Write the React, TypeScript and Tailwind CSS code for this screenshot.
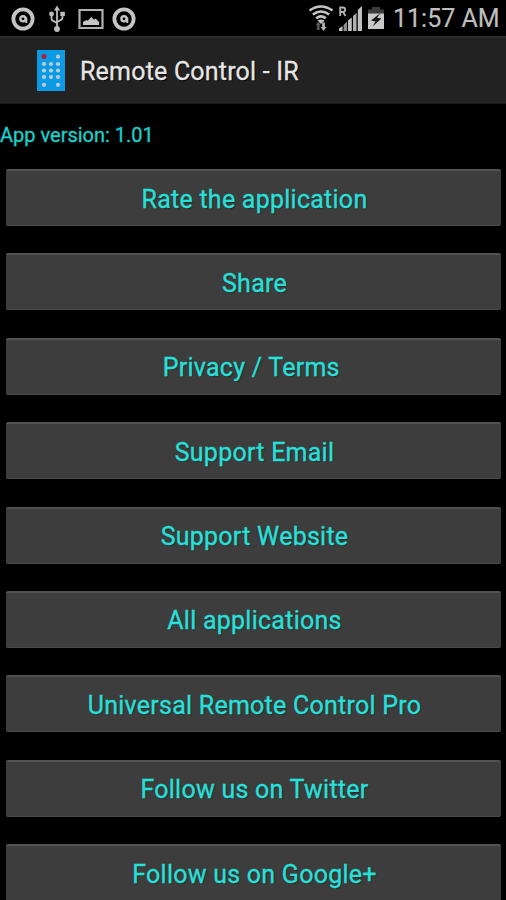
const actions = [
  'Rate the application',
  'Share',
  'Privacy / Terms ',
  'Support Email',
  'Support Website',
  'All applications',
  'Universal Remote Control Pro',
  'Follow us on Twitter',
  'Follow us on Google+',
];

const AppBadgeIcon = () => (
  <svg width="24" height="24" viewBox="0 0 24 24" fill="none" stroke="#c4c4c4">
    <circle cx="12" cy="12" r="9.6" strokeWidth="3.8" />
    <circle cx="12" cy="11.8" r="2.600" strokeWidth="2.400" />
    <path d="M15.300 10.500v5.500" strokeWidth="2" />
  </svg>
);

const UsbIcon = () => (
  <svg width="18" height="28" viewBox="0 0 18 28" fill="none" stroke="#bdbdbd" strokeWidth="1.8">
    <path d="M9 4v20" />
    <path d="M3.500 10v3.500q0 2 2 2.600L9 18" />
    <path d="M14.500 9v3.500q0 2-2 2.600L9 17" />
    <g fill="#bdbdbd" stroke="none">
      <path d="M9 0.500l3 5H6z" />
      <circle cx="3.500" cy="9" r="2.400" />
      <path d="M12.300 6.800h4.600v4.200h-4.600z" />
      <circle cx="9" cy="24" r="2.900" />
    </g>
  </svg>
);

const PictureIcon = () => (
  <svg width="26" height="22" viewBox="0 0 26 22" fill="none">
    <path d="M1.500 2h23v18h-23z" stroke="#b0b0b0" strokeWidth="2.200" />
    <path d="M5 17v-3l3-1.800 2 .2 3.200-3.400 2.800 2.800 1.600-1.300 3.400 3.500v3z" fill="#c4c4c4" />
  </svg>
);

const WifiIcon = () => (
  <svg width="26" height="28" viewBox="0 0 26 28" fill="none" stroke="#c4c4c4" strokeWidth="2.600">
    <path d="M1.500 6.500q11.500-8 23 0" />
    <path d="M4.800 10.500q8.200-6 16.400 0" />
    <path d="M8.200 14.200q4.800-3.600 9.600 0" />
    <path d="M9.500 16.500q3.500-2 7 0L13 20z" fill="#c4c4c4" stroke="none" />
    <path d="M10.300 17.500l2.300 3.500h-1V26H8.800v-5H7.600z" fill="#555" stroke="none" />
    <path d="M15.500 27l-3-4h1.600v-4.500h2.800V23h1.600z" fill="#b0b0b0" stroke="none" />
  </svg>
);

const SignalIcon = () => (
  <svg width="26" height="26" viewBox="0 0 26 26" fill="#c0c0c0">
    <path d="M2.200 10V1.500h2.500q2.500 0 2.500 2.200T4.700 6H2.200M5 6l2.600 4" fill="none" stroke="#b4b4b4" strokeWidth="1.800" />
    <path d="M1 22.500L4.500 20v5H1z" />
    <path d="M5.600 19L9 15.500V25H5.600z" fill="#8f8f8f" />
    <path d="M10 14.500l3.800-3V25H10z" />
    <path d="M15 10l3.500-3v18H15z" fill="#b0b0b0" />
    <path d="M19.800 4L24 0v25h-4.200z" />
  </svg>
);

const BatteryIcon = () => (
  <svg width="18" height="24" viewBox="0 0 18 24">
    <path d="M5 1h8v2.500h4V9H1V3.500h4z" fill="#3c3c3c" />
    <path d="M1 7.500h16V23H1z" fill="#c8c8c8" />
    <path d="M13.500 7L4 14.500l4.500 1L5.500 20.500l9-8-4.500-.7z" fill="#111" />
  </svg>
);

const RemoteIcon = () => (
  <svg width="28" height="41" viewBox="0 0 28 41">
    <path d="M0 0h28v41H0z" fill="#0c9ae4" />
    <g fill="#bccbd8">
      <circle cx="21" cy="6.700" r="2.100" />
      {[14, 20.5, 27].map((y) =>
        [7, 14, 21].map((x) => <circle key={`${x}-${y}`} cx={x} cy={y} r="2.100" />)
      )}
      <circle cx="7" cy="34.800" r="2.100" />
      <circle cx="21" cy="34.800" r="2.100" />
    </g>
    <circle cx="7" cy="6.500" r="2.500" fill="#b01d3c" />
  </svg>
);

const StatusBar = () => (
  <div className="flex h-9 items-center bg-black pt-[2px] pl-[11px] pr-[6px]">
    <AppBadgeIcon />
    <div className="ml-[13px]"><UsbIcon /></div>
    <div className="ml-[12px]"><PictureIcon /></div>
    <div className="ml-[8px]"><AppBadgeIcon /></div>
    <div className="ml-auto flex items-center">
      <div className="-mt-[2px]"><WifiIcon /></div>
      <div className="ml-[4px]"><SignalIcon /></div>
      <div className="ml-[3px] -mt-[2px]"><BatteryIcon /></div>
      <span className="ml-[8px] w-[107px] whitespace-nowrap text-[25px] leading-9 text-[#bebebe] [-webkit-text-stroke:0.2px_#bebebe]">11:57 AM</span>
    </div>
  </div>
);

export default function App() {
  return (
    <div className="h-[900px] w-[506px] overflow-hidden bg-black font-['Roboto',sans-serif]">
      <StatusBar />

      <header className="flex h-[68px] items-center border-t-2 border-b border-t-[#2c2c2c] border-b-[#1a1a1a] bg-[#222] pl-[37px]">
        <RemoteIcon />
        <h1 className="ml-[15px] pt-[2px] text-[25px] tracking-[0.2px] text-[#e6e6e6] [-webkit-text-stroke:0.3px_#e6e6e6] [text-shadow:1px_1px_1px_#000]">
          Remote Control - IR
        </h1>
      </header>

      <p className="mt-[19px] h-[24px] text-[20px] leading-6 text-[#1cd0cb] [-webkit-text-stroke:0.3px_#1cd0cb]">App version: 1.01</p>

      <main className="mt-[22px] flex flex-col gap-[27.4px] pl-[6px] pr-[5px]">
        {actions.map((label) => (
          <button
            key={label}
            className="h-[57px] shrink-0 rounded-[2px] border-t-2 border-b border-t-[#525252] border-b-[#4a4a4a] bg-[#3d3d3d] pt-[2px] pl-[2px] text-[25px] leading-none tracking-[0.25px] whitespace-pre text-[#27e0dc] [-webkit-text-stroke:0.3px_#27e0dc] [text-shadow:1px_1px_1px_#2a2a2a]"
          >
            {label}
          </button>
        ))}
      </main>
    </div>
  );
}
